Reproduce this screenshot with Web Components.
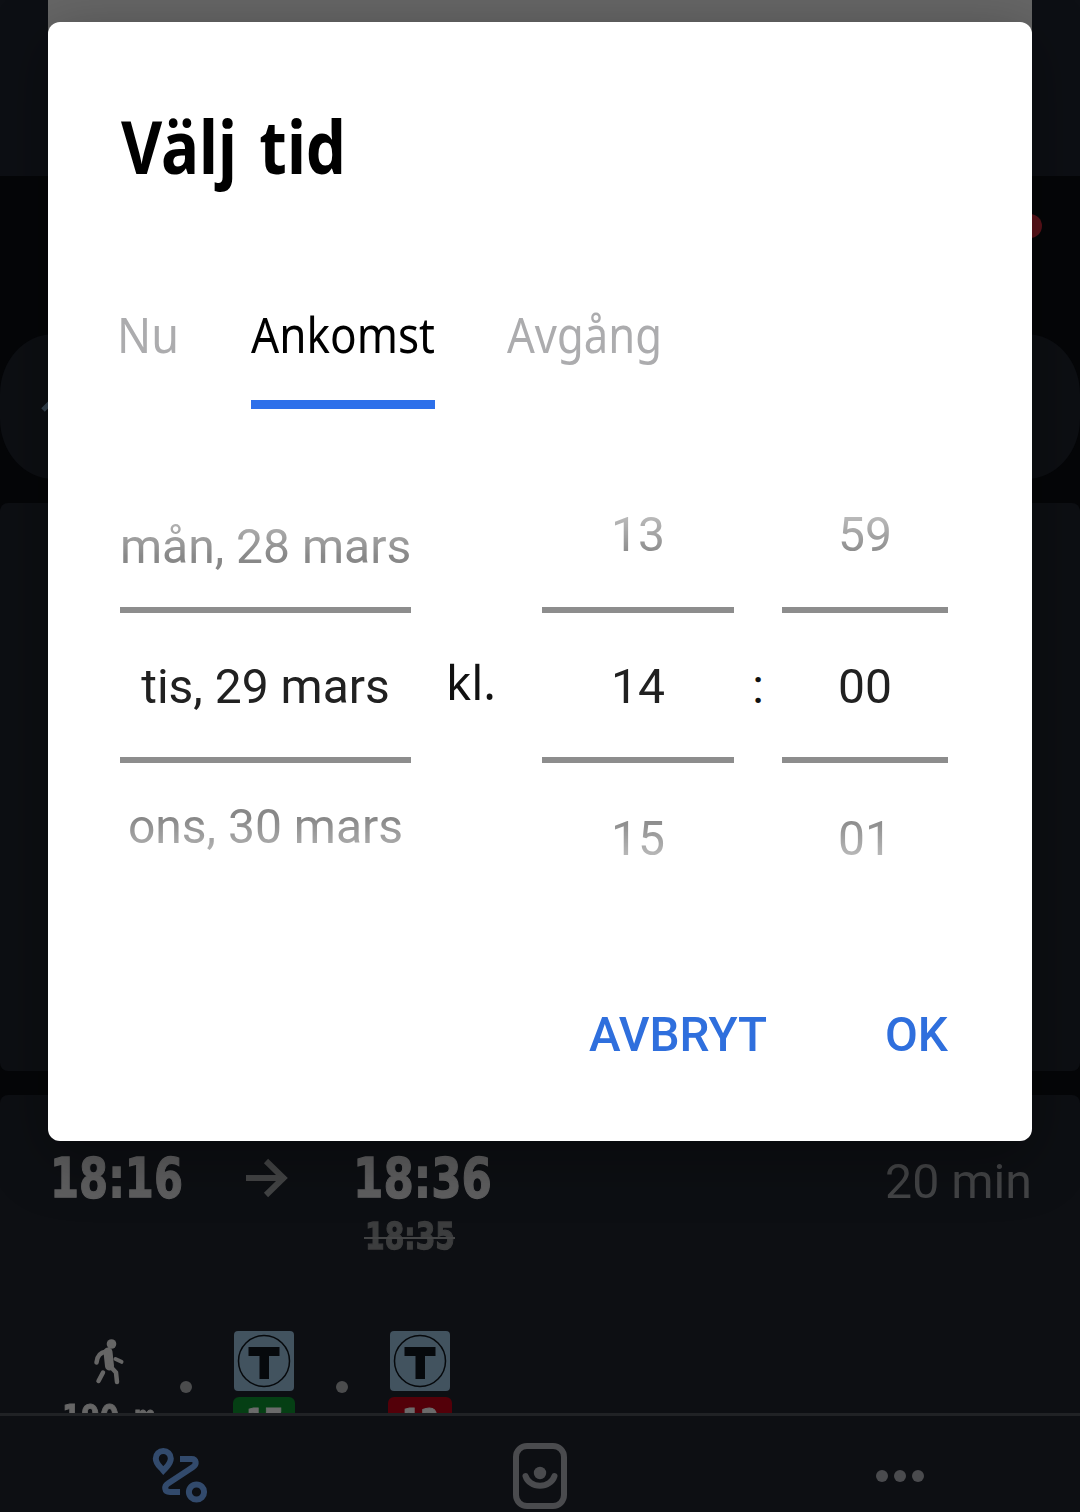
<!DOCTYPE html>
<html lang="sv">
<head>
<meta charset="utf-8">
<title>Välj tid</title>
<style>
html,body{margin:0;padding:0;background:#050608}
body{width:1080px;height:1512px;overflow:hidden;font-family:Roboto,"Noto Sans",sans-serif}
</style>
</head>
<body>
<trip-screen></trip-screen>
<script>
function define(name, html, ready){
  const tpl=document.createElement('template');
  tpl.innerHTML=html;
  customElements.define(name, class extends HTMLElement{
    constructor(){
      super();
      this.attachShadow({mode:'open'}).appendChild(tpl.content.cloneNode(true));
    }
    connectedCallback(){ if(ready) ready(this,this.shadowRoot); }
  });
}

/* One line of text, condensed or widened to a given advance width. */
define('fit-text', `
<style>
:host{display:block;white-space:nowrap;flex:none}
span{display:inline-block;transform-origin:0 0;vertical-align:top}
</style><span><slot></slot></span>`, (el,root)=>{
  const w=+el.getAttribute('w'), span=root.querySelector('span');
  el.style.fontSize=el.getAttribute('size')+'px';
  el.style.lineHeight=el.getAttribute('lh')+'px';
  el.style.height=el.getAttribute('lh')+'px';
  el.style.width=w+'px';
  const fit=()=>{span.style.transform='none';const n=span.getBoundingClientRect().width;if(n)span.style.transform='scaleX('+(w/n)+')';};
  fit();
  requestAnimationFrame(fit);
});

define('time-tab', `
<style>
:host{display:flex;flex-direction:column;color:#acacae;font-family:"Noto Sans",sans-serif;height:102px;box-sizing:border-box}
:host([active]){color:#000;border-bottom:9px solid #2d70ea}
</style><slot></slot>`);

define('wheel-picker', `
<style>
:host{display:flex;flex-direction:column;height:448px;flex:none;text-align:center;color:#888;
 font:400 48px/60px Roboto,sans-serif;white-space:nowrap;
 -webkit-mask-image:linear-gradient(transparent 0,#000 93px,#000 355px,transparent 448px);
 mask-image:linear-gradient(transparent 0,#000 93px,#000 355px,transparent 448px)}
.prev{height:144px;box-sizing:border-box;padding-top:var(--before,42px)}
.now{height:156px;box-sizing:border-box;border:solid #8d8d8d;border-width:6px 0;padding-top:44px;color:#212121}
.next{padding-top:var(--after,46px)}
</style>
<div class="prev"><slot name="prev"></slot></div>
<div class="now"><slot></slot></div>
<div class="next"><slot name="next"></slot></div>`);

define('time-dialog', `
<style>
:host{display:flex;flex-direction:column;width:984px;height:1119px;box-sizing:border-box;background:#fff;border-radius:12px;
 padding:74px 84px 0 72px;box-shadow:0 16px 60px rgba(0,0,0,.35)}
.title{font-family:"Noto Sans",sans-serif;font-weight:700;color:#000;word-spacing:7px;margin-left:1px}
.tabs{display:flex;margin-top:111px}
.tabs>:nth-child(1){margin-left:-3px;margin-right:72px}
.tabs>:nth-child(2){margin-right:72px}
.wheels{display:flex;margin-top:54px}
.kl{width:131px;box-sizing:border-box;padding:189px 0 0 35px;color:#111;font-family:"Noto Sans",sans-serif}
.colon{width:48px;text-align:center;padding-top:194px;font:400 48px/60px Roboto,sans-serif;color:#111}
.actions{display:flex;justify-content:flex-end;gap:118px;margin-top:94px;color:#2f6fdd;font-weight:500}
</style>
<fit-text class="title" w="225" size="74" lh="100">Välj tid</fit-text>
<div class="tabs">
<time-tab><fit-text w="62" size="49" lh="54">Nu</fit-text></time-tab>
<time-tab active><fit-text w="184" size="49" lh="54">Ankomst</fit-text></time-tab>
<time-tab><fit-text w="155" size="49" lh="54">Avgång</fit-text></time-tab>
</div>
<div class="wheels">
<wheel-picker style="width:291px;--before:54px;--after:34px"><span slot="prev">mån, 28 mars</span>tis, 29 mars<span slot="next">ons, 30 mars</span></wheel-picker>
<div class="kl"><fit-text w="50" size="48" lh="60">kl.</fit-text></div>
<wheel-picker style="width:192px"><span slot="prev">13</span>14<span slot="next">15</span></wheel-picker>
<div class="colon">:</div>
<wheel-picker style="width:166px"><span slot="prev">59</span>00<span slot="next">01</span></wheel-picker>
</div>
<div class="actions"><fit-text w="178" size="48" lh="60">AVBRYT</fit-text><fit-text w="63" size="48" lh="60">OK</fit-text></div>`);

define('metro-leg', `
<style>
:host{display:flex;flex-direction:column;align-items:center;gap:6px;flex:none}
svg{display:block}
.line{align-self:stretch;height:54px;border-radius:6px;background:var(--line);display:flex;justify-content:center;padding-top:4px;color:#6b6b6b;font-family:"DejaVu Sans",sans-serif;font-weight:700;-webkit-text-stroke:1px currentColor}
</style>
<svg width="60" height="60" viewBox="0 0 60 60"><rect width="60" height="60" rx="4" fill="#42535f"/><circle cx="30" cy="30" r="25.5" fill="none" stroke="#06090c" stroke-width="1.5"/><path d="M14.500 16h31v9H35v23h-9.500V25h-11z" fill="#06090c"/></svg>
<div class="line"><slot></slot></div>`);

define('trip-card', `
<style>
:host{display:flex;flex-direction:column;height:318px;box-sizing:border-box;overflow:hidden;background:#0d0f13;border-radius:8px 8px 0 0;padding:53px 48px 0 50px}
.head{display:flex;height:60px}
.time{font-family:"DejaVu Sans",sans-serif;font-weight:700;color:#5f5f60;-webkit-text-stroke:1.3px currentColor}
.arrow{margin:10px 65px 0 63px;flex:none}
.dur{margin-left:auto;padding-top:4px;color:#434446}
.old{position:relative;margin:6px 0 0 315px;width:90px;color:#3c3d3e}
.old i{position:absolute;left:-1px;top:23px;width:91px;height:2px;background:#444546}
.legs{display:flex;margin:71px 0 0 12px}
.walk{width:92px;height:90px}
.walk svg{display:block;margin-left:28px}
.dist{display:flex;align-items:flex-start;gap:15px;margin-top:11px;color:#666;font-family:"DejaVu Sans",sans-serif;font-weight:700;-webkit-text-stroke:1px currentColor}
.dot{width:12px;height:12px;border-radius:50%;background:#4b4c4d;margin-top:50px;flex:none}
</style>
<div class="head">
<fit-text class="time" w="133" size="56" lh="60">18:16</fit-text>
<svg class="arrow" width="42" height="40" viewBox="0 0 42 40"><path d="M0 20h37M20 3l17.500 17L20 37" fill="none" stroke="#434445" stroke-width="6"/></svg>
<fit-text class="time" w="139" size="56" lh="60">18:36</fit-text>
<fit-text class="dur" w="147" size="48" lh="60">20 min</fit-text>
</div>
<div class="old"><fit-text class="time" style="color:inherit" w="90" size="37" lh="46">18:35</fit-text><i></i></div>
<div class="legs">
<div class="walk"><svg width="40" height="56" viewBox="0 0 40 56"><g fill="none" stroke="#666" stroke-linecap="round" stroke-linejoin="round"><path d="M16 20.500c-6 1-9 5-9.500 11" stroke-width="4.500"/><path d="M18 21l1.500 14" stroke-width="9"/><path d="M20 35l6 6.500 1 9.500" stroke-width="4.500"/><path d="M13 41.500L8.500 50" stroke-width="4.500"/><path d="M25.500 28l6 2.800" stroke-width="4" /></g><circle cx="21.500" cy="13" r="4.800" fill="#666"/></svg>
<div class="dist"><fit-text w="57" size="36" lh="40">190</fit-text><fit-text w="22" size="30" lh="40" style="margin-top:-1px">m</fit-text></div></div>
<div class="dot" style="margin-left:26px;margin-right:41px"></div>
<metro-leg style="width:62px;--line:#053f14"><fit-text w="37" size="36" lh="42">17</fit-text></metro-leg>
<div class="dot" style="margin-left:41px;margin-right:40px"></div>
<metro-leg style="width:64px;--line:#530009"><fit-text w="37" size="36" lh="42">12</fit-text></metro-leg>
</div>`);

define('bottom-nav', `
<style>
:host{display:flex;height:99px;box-sizing:border-box;border-top:3px solid #202225;background:#0d0f13}
div{flex:1;display:flex;justify-content:center;padding-top:24px}
svg{display:block}
</style>
<div style="padding-top:27px"><svg width="60" height="72" viewBox="0 0 60 72"><g fill="none" stroke="#324a6c" stroke-width="6"><path d="M13.300 28.500C9.500 24 5.800 22 5.800 16.500a7.500 7.500 0 0 1 15 0c0 5.500-3.500 7.500-7.500 12z" transform="translate(0 -1)" stroke-linejoin="miter"/><path d="M30 16h11.500c5 0 5.500 5.500 1.500 8L18 40.500c-4 2.500-4 8.500 2 8.500h10"/><circle cx="46.500" cy="49" r="7.600"/></g></svg></div>
<div><svg width="60" height="72" viewBox="0 0 60 72"><g fill="none" stroke="#4a4b4e" stroke-width="6" stroke-linecap="round"><rect x="6" y="6" width="48" height="60" rx="11"/><path d="M15.500 36a15 13 0 0 0 29 0"/></g><circle cx="30" cy="33" r="6.200" fill="#4a4b4e"/></svg></div>
<div><svg width="60" height="72" viewBox="0 0 60 72" fill="#4a4b4e"><circle cx="12" cy="36" r="6"/><circle cx="30" cy="36" r="6"/><circle cx="48" cy="36" r="6"/></svg></div>`);

define('trip-screen', `
<style>
:host{display:flex;flex-direction:column;position:relative;width:1080px;height:1512px;background:#050608}
.top{height:176px;background:#0d0f14;display:flex;justify-content:center}
.ad{width:984px;height:150px;background:#666}
.bar{height:158px;box-sizing:border-box;padding:38px 38px 0;display:flex;justify-content:flex-end}
.bar i{width:24px;height:24px;border-radius:50%;background:#5d131a}
.search{height:145px;border-radius:54px/60px;background:#0d0f13;box-sizing:border-box;padding:50px 0 0 40px}
.card{height:568px;margin:24px 0;border-radius:8px;background:#0d0f13;flex:none}
time-dialog{position:absolute;left:48px;top:22px}
</style>
<div class="top"><div class="ad"></div></div>
<div class="bar"><i></i></div>
<div class="search"><svg width="40" height="40" viewBox="0 0 40 40" style="display:block"><path d="M3 26L18 11l15 15" fill="none" stroke="#364350" stroke-width="5"/></svg></div>
<div class="card"></div>
<trip-card></trip-card>
<bottom-nav></bottom-nav>
<time-dialog></time-dialog>`);
</script>
</body>
</html>
